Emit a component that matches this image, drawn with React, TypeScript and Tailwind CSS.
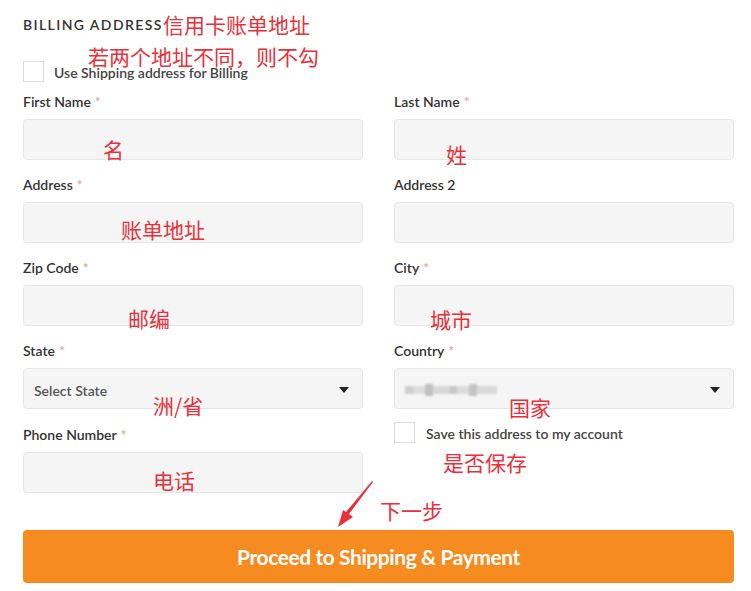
import React from "react";

const red = "text-[#e8303a]";

function Label({ text, required }: { text: string; required?: boolean }) {
  return (
    <div className="h-4 text-[14px] leading-4 font-semibold text-[#333]">
      {text}
      {required && <span className="ml-1 text-[#eca886]">*</span>}
    </div>
  );
}

function Field({ label, required }: { label: string; required?: boolean }) {
  return (
    <div>
      <Label text={label} required={required} />
      <div className="mt-[9px] h-[41px] rounded-[4px] border border-[#e6e6e6] bg-[#f5f5f5]" />
    </div>
  );
}

function Caret() {
  return (
    <svg width="10" height="6" viewBox="0 0 10 6" className="mr-[13px]">
      <path d="M0 0h10L5 6z" fill="#222" />
    </svg>
  );
}

function SelectField({ label, children }: { label: string; children: React.ReactNode }) {
  return (
    <div>
      <Label text={label} required />
      <div className="mt-[9px] flex h-[41px] items-center justify-between rounded-[4px] border border-[#e6e6e6] bg-[#f5f5f5] pl-[10px] pt-[3px]">
        {children}
        <Caret />
      </div>
    </div>
  );
}

function Box() {
  return <div className="h-[21px] w-[21px] shrink-0 border border-[#dcdcdc] bg-white" />;
}

function Note({ text, className }: { text: string; className: string }) {
  return (
    <div
      className={`absolute whitespace-nowrap text-[21px] leading-[21px] ${red} ${className}`}
      style={{ fontFamily: '"Noto Sans CJK SC", sans-serif' }}
    >
      {text}
    </div>
  );
}

export default function App() {
  return (
    <div
      className="relative h-[591px] w-[751px] overflow-hidden bg-white pl-[23px] pr-[17px] pt-[15px]"
      style={{ fontFamily: "Lato, 'Open Sans', sans-serif" }}
    >
      <h2 className="h-5 text-[14px] leading-5 font-semibold tracking-[0.1em] text-[#333]">
        BILLING ADDRESS
      </h2>

      <label className="mt-[26px] flex h-[21px] items-center gap-[10px]">
        <Box />
        <span className="mt-[2px] text-[14px] leading-[19px] font-semibold text-[#444]">Use Shipping address for Billing</span>
      </label>

      <div className="mt-3 grid grid-cols-2 gap-x-[31px] gap-y-[17px]">
        <Field label="First Name" required />
        <Field label="Last Name" required />
        <Field label="Address" required />
        <Field label="Address 2" />
        <Field label="Zip Code" required />
        <Field label="City" required />
        <SelectField label="State">
          <span className="text-[14px] font-semibold text-[#555]">Select State</span>
        </SelectField>
        <div>
          <SelectField label="Country">
            <div className="flex h-3 items-center opacity-80 blur-[1.2px]">
              <span className="h-2 w-2 bg-[#c4c4c4]" />
              <span className="h-2 w-3 bg-[#d8d8d8]" />
              <span className="h-3 w-2 bg-[#b4b4b4]" />
              <span className="h-2 w-4 bg-[#d2d2d2]" />
              <span className="h-2 w-2 bg-[#bdbdbd]" />
              <span className="h-2 w-3 bg-[#d5d5d5]" />
              <span className="h-3 w-2 bg-[#b9b9b9]" />
              <span className="h-2 w-[20px] bg-[#d3d3d3]" />
            </div>
          </SelectField>
          <label className="mt-[13px] flex h-[21px] items-center gap-[11px]">
            <Box />
            <span className="mt-[2px] text-[14px] leading-[19px] font-semibold text-[#444]">Save this address to my account</span>
          </label>
        </div>
        <div className="-mt-[33px]">
          <Field label="Phone Number" required />
        </div>
      </div>

      <button className="mt-[37px] flex h-[53px] w-full items-center justify-center rounded-[4px] bg-[#f68b1f] text-[21px] font-bold tracking-[-0.02em] text-white">
        Proceed to Shipping &amp; Payment
      </button>

      <Note text="信用卡账单地址" className="left-[163px] top-[14px]" />
      <Note text="若两个地址不同，则不勾" className="left-[88px] top-[46px]" />
      <Note text="名" className="left-[103px] top-[139px]" />
      <Note text="姓" className="left-[446px] top-[144px]" />
      <Note text="账单地址" className="left-[121px] top-[219px]" />
      <Note text="邮编" className="left-[128px] top-[308px]" />
      <Note text="城市" className="left-[430px] top-[309px]" />
      <Note text="洲/省" className="left-[153px] top-[395px]" />
      <Note text="国家" className="left-[509px] top-[397px]" />
      <Note text="是否保存" className="left-[443px] top-[452px]" />
      <Note text="电话" className="left-[153px] top-[470px]" />
      <Note text="下一步" className="left-[380px] top-[500px]" />

      <svg className="absolute left-[334px] top-[480px]" width="44" height="50" viewBox="0 0 44 50">
        <path d="M39 2 L15 34 L19 37 L4 47 L9 30 L12 32 L38 1 Z" fill="#e8303a" />
      </svg>
    </div>
  );
}
